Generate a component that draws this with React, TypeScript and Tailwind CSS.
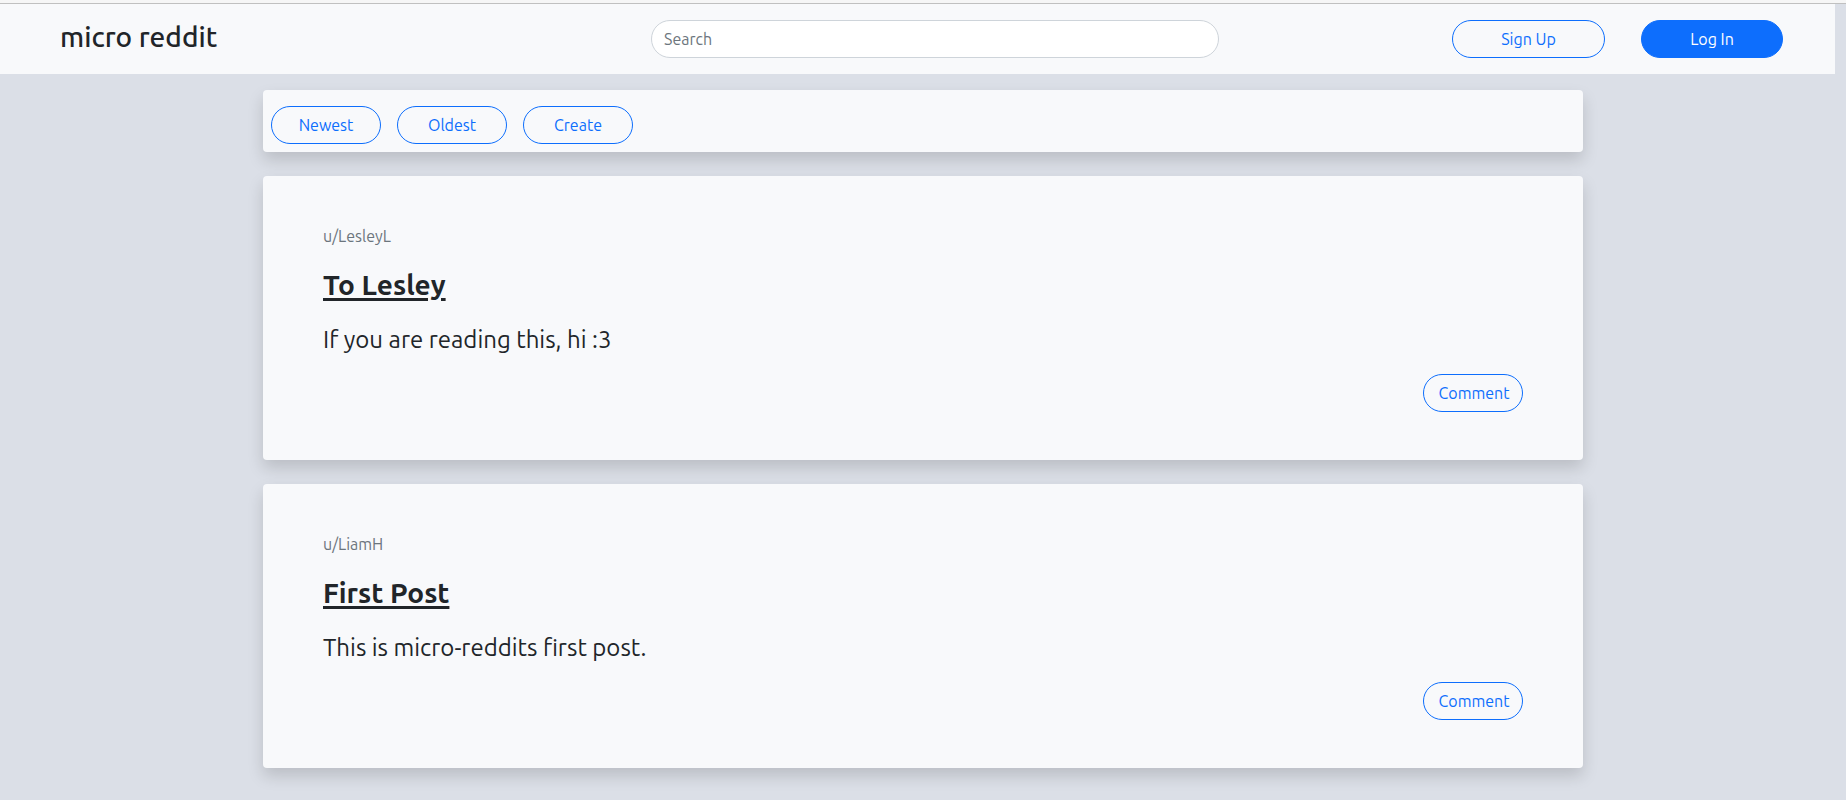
import React from "react";

type Post = { id: number; author: string; title: string; body: string };

const posts: Post[] = [
  { id: 2, author: "LesleyL", title: "To Lesley", body: "If you are reading this, hi :3" },
  { id: 1, author: "LiamH", title: "First Post", body: "This is micro-reddits first post." },
];

const pill =
  "h-[38px] rounded-[20px] border border-[#0d6efd] text-base leading-6 cursor-pointer";
const outline = "text-[#0d6efd] hover:bg-[#0d6efd] hover:text-white";
const card = "rounded bg-[#f8f9fb] shadow-[0_8px_16px_rgba(0,0,0,0.15)]";

function NavBar() {
  return (
    <nav className="mr-[11px] grid grid-cols-[591fr_568fr_564fr] items-center bg-[#f8f9fb] py-4 pr-[52px] pl-[60px]">
      <a href="#home" className="pb-1 text-[28px] leading-[34px] font-medium">
        micro reddit
      </a>
      <form role="search" onSubmit={(e) => e.preventDefault()}>
        <input
          type="search"
          aria-label="Search"
          placeholder="Search"
          className="block h-[38px] w-full rounded-[20px] border border-[#ced4da] bg-white px-3 text-base outline-none placeholder:text-[#6c757d]"
        />
      </form>
      <div className="flex justify-end gap-9">
        <button type="button" className={`${pill} ${outline} w-[153px]`}>
          Sign Up
        </button>
        <button type="button" className={`${pill} w-[142px] bg-[#0d6efd] text-white`}>
          Log In
        </button>
      </div>
    </nav>
  );
}

function Toolbar() {
  return (
    <div className={`${card} flex gap-4 px-2 pt-4 pb-2`}>
      {["Newest", "Oldest", "Create"].map((label) => (
        <button key={label} type="button" className={`${pill} ${outline} w-[110px]`}>
          {label}
        </button>
      ))}
    </div>
  );
}

function PostCard({ post }: { post: Post }) {
  return (
    <article className={`${card} flex flex-col gap-4 px-[60px] py-12`}>
      <p className="text-base leading-6 text-[#6c757d]">u/{post.author}</p>
      <h2 className="text-[28px] leading-[42px] font-bold">
        <a href={`#post-${post.id}`} className="underline decoration-[3px] underline-offset-[3px]">
          {post.title}
        </a>
      </h2>
      <p className="text-2xl leading-9">{post.body}</p>
      <button type="button" className={`${pill} ${outline} w-[100px] self-end pl-0.5`}>
        Comment
      </button>
    </article>
  );
}

export default function App() {
  return (
    <div className="min-h-screen bg-[#dbdfe7] font-['Ubuntu','Noto_Sans',sans-serif] text-[#212529]">
      <div className="h-1 border-b border-[#c0c0c0] bg-[#f6f6f6]" />
      <NavBar />
      <main className="mx-auto flex max-w-[1320px] flex-col gap-6 pt-4 pb-8">
        <Toolbar />
        {posts.map((post) => (
          <PostCard key={post.id} post={post} />
        ))}
      </main>
    </div>
  );
}
